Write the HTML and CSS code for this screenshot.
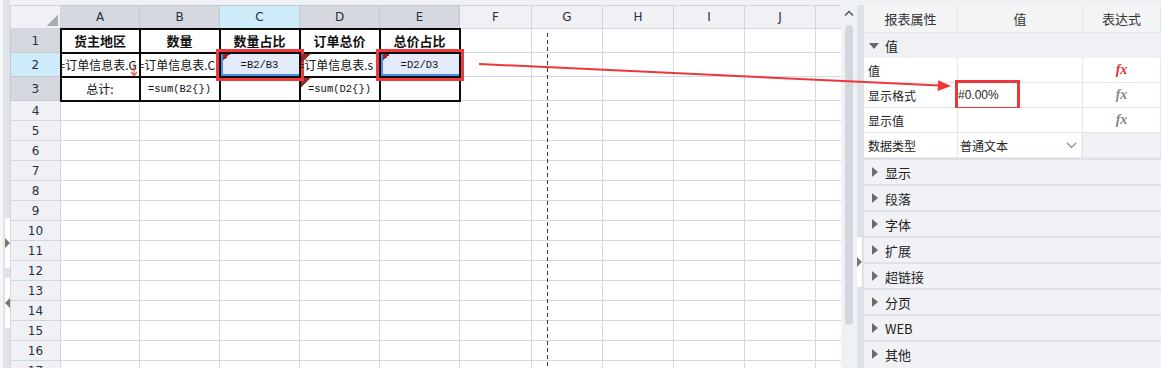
FILE: index.html
```html
<!DOCTYPE html>
<html lang="zh-CN">
<head>
    <meta charset="UTF-8">
    <title>报表设计 - 占比</title>
    <meta name="viewport" content="width=device-width, initial-scale=1">
    <link rel="stylesheet" href="styles.css">
</head>
<body>

<div class="app">
    <div class="edge">
        <div class="edge-tab"><span class="tri-right"></span></div>
        <div class="edge-tab"><span class="tri-left"></span></div>
    </div>

    <div class="main">
        <div class="sheet">
            <table class="grid">
                <colgroup>
                    <col class="w-hd">
                    <col class="w-a">
                    <col class="w-m"><col class="w-m"><col class="w-m"><col class="w-m">
                    <col class="w-f">
                    <col class="w-n"><col class="w-n"><col class="w-n"><col class="w-n"><col class="w-n">
                </colgroup>
                <thead>
                <tr class="r-head">
                    <th class="corner"></th>
                    <th class="dark">A</th>
                    <th class="dark">B</th>
                    <th class="cur">C</th>
                    <th class="dark">D</th>
                    <th class="dark">E</th>
                    <th>F</th>
                    <th>G</th>
                    <th>H</th>
                    <th>I</th>
                    <th>J</th>
                    <th></th>
                </tr>
                </thead>
                <tbody>
                <tr class="r-tall">
                    <th class="dark">1</th>
                    <td class="b title">货主地区</td>
                    <td class="b title">数量</td>
                    <td class="b title">数量占比</td>
                    <td class="b title">订单总价</td>
                    <td class="b title">总价占比</td>
                    <td></td><td></td><td></td><td></td><td></td><td></td>
                </tr>
                <tr class="r-tall">
                    <th class="cur">2</th>
                    <td class="b field"><span class="clip">=订单信息表.G</span>
                        <svg class="expand" width="8" height="14" viewBox="0 0 8 14">
                            <path d="M4 0.5V12.5M1 9l3 3.5L7 9" fill="none" stroke="#ee5a4a" stroke-width="1.2"/>
                        </svg>
                    </td>
                    <td class="b field"><span class="clip">=订单信息表.C</span></td>
                    <td class="b formula sel flag">=B2/B3</td>
                    <td class="b field flag"><span class="clip">=订单信息表.s</span></td>
                    <td class="b formula sel flag">=D2/D3</td>
                    <td></td><td></td><td></td><td></td><td></td><td></td>
                </tr>
                <tr class="r-tall">
                    <th class="dark">3</th>
                    <td class="b plain">总计:</td>
                    <td class="b formula">=sum(B2{})</td>
                    <td class="b"></td>
                    <td class="b formula flag">=sum(D2{})</td>
                    <td class="b"></td>
                    <td></td><td></td><td></td><td></td><td></td><td></td>
                </tr>
                <tr><th>4</th><td></td><td></td><td></td><td></td><td></td><td></td><td></td><td></td><td></td><td></td><td></td></tr>
                <tr><th>5</th><td></td><td></td><td></td><td></td><td></td><td></td><td></td><td></td><td></td><td></td><td></td></tr>
                <tr><th>6</th><td></td><td></td><td></td><td></td><td></td><td></td><td></td><td></td><td></td><td></td><td></td></tr>
                <tr><th>7</th><td></td><td></td><td></td><td></td><td></td><td></td><td></td><td></td><td></td><td></td><td></td></tr>
                <tr><th>8</th><td></td><td></td><td></td><td></td><td></td><td></td><td></td><td></td><td></td><td></td><td></td></tr>
                <tr><th>9</th><td></td><td></td><td></td><td></td><td></td><td></td><td></td><td></td><td></td><td></td><td></td></tr>
                <tr><th>10</th><td></td><td></td><td></td><td></td><td></td><td></td><td></td><td></td><td></td><td></td><td></td></tr>
                <tr><th>11</th><td></td><td></td><td></td><td></td><td></td><td></td><td></td><td></td><td></td><td></td><td></td></tr>
                <tr><th>12</th><td></td><td></td><td></td><td></td><td></td><td></td><td></td><td></td><td></td><td></td><td></td></tr>
                <tr><th>13</th><td></td><td></td><td></td><td></td><td></td><td></td><td></td><td></td><td></td><td></td><td></td></tr>
                <tr><th>14</th><td></td><td></td><td></td><td></td><td></td><td></td><td></td><td></td><td></td><td></td><td></td></tr>
                <tr><th>15</th><td></td><td></td><td></td><td></td><td></td><td></td><td></td><td></td><td></td><td></td><td></td></tr>
                <tr><th>16</th><td></td><td></td><td></td><td></td><td></td><td></td><td></td><td></td><td></td><td></td><td></td></tr>
                <tr><th>17</th><td></td><td></td><td></td><td></td><td></td><td></td><td></td><td></td><td></td><td></td><td></td></tr>
                </tbody>
            </table>
            <div class="page-break"></div>
        </div>

        <div class="vscroll">
            <svg class="up" width="10" height="6" viewBox="0 0 10 6">
                <path d="M1 5.5L5 1.5L9 5.5" fill="none" stroke="#555" stroke-width="1.5"/>
            </svg>
            <div class="thumb"></div>
        </div>

        <div class="splitter">
            <div class="split-tab"><span class="tri-right"></span></div>
        </div>

        <div class="panel">
            <div class="phead">
                <div>报表属性</div>
                <div>值</div>
                <div>表达式</div>
            </div>
            <div class="group"><span class="tri-down"></span>值</div>
            <div class="prop">
                <div class="k">值</div>
                <div class="v"></div>
                <div class="x"><i class="fx on">fx</i></div>
            </div>
            <div class="prop">
                <div class="k">显示格式</div>
                <div class="v"><span class="fmt">#0.00%</span></div>
                <div class="x"><i class="fx">fx</i></div>
            </div>
            <div class="prop">
                <div class="k">显示值</div>
                <div class="v"></div>
                <div class="x"><i class="fx">fx</i></div>
            </div>
            <div class="prop">
                <div class="k">数据类型</div>
                <div class="v">
                    <div class="select">
                        <span>普通文本</span>
                        <svg width="11" height="7" viewBox="0 0 11 7">
                            <path d="M1 1l4.5 4.5L10 1" fill="none" stroke="#888" stroke-width="1.1"/>
                        </svg>
                    </div>
                </div>
                <div class="x off"></div>
            </div>
            <div class="sect"><span class="tri-sect"></span>显示</div>
            <div class="sect"><span class="tri-sect"></span>段落</div>
            <div class="sect"><span class="tri-sect"></span>字体</div>
            <div class="sect"><span class="tri-sect"></span>扩展</div>
            <div class="sect"><span class="tri-sect"></span>超链接</div>
            <div class="sect"><span class="tri-sect"></span>分页</div>
            <div class="sect"><span class="tri-sect"></span>WEB</div>
            <div class="sect"><span class="tri-sect"></span>其他</div>
        </div>
    </div>
</div>

<!-- annotation: C2/E2 format goes to 显示格式 -->
<svg class="pointer" width="1161" height="368" viewBox="0 0 1161 368">
    <line x1="479" y1="64" x2="940" y2="85.5" stroke="#f0353a" stroke-width="2"/>
    <polygon points="951,86 938.2,80.2 937.6,91" fill="#f0353a"/>
</svg>

</body>
</html>
```

FILE: styles.css
```css
* {
    box-sizing: border-box;
}

html, body {
    margin: 0;
}

body {
    position: relative;
    width: 1161px;
    height: 368px;
    overflow: hidden;
    background: #f0f1f4;
    font-family: "Noto Sans CJK SC", "Liberation Sans", sans-serif;
    color: #222;
}

.app {
    display: flex;
    height: 368px;
}

/* left collapsed strip */
.edge {
    width: 10px;
    flex: none;
    display: flex;
    flex-direction: column;
    align-items: flex-end;
    gap: 10px;
    padding-top: 218px;
    background: linear-gradient(to right, #f5f6f8 0 3px, #dfe3e8 3px);
}

.edge-tab {
    width: 5px;
    height: 50px;
    background: #fff;
    display: flex;
    align-items: center;
}

.tri-right {
    width: 0;
    height: 0;
    border-top: 5px solid transparent;
    border-bottom: 5px solid transparent;
    border-left: 5px solid #7d746c;
}

.tri-left {
    width: 0;
    height: 0;
    border-top: 5px solid transparent;
    border-bottom: 5px solid transparent;
    border-right: 5px solid #7d746c;
}

.main {
    flex: 1;
    display: flex;
    padding-top: 5px;
}

/* spreadsheet */
.sheet {
    position: relative;
    width: 831px;
    flex: none;
    overflow: hidden;
    background: #fff;
}

.grid {
    border-collapse: collapse;
    table-layout: fixed;
    width: 876px;
}

.w-hd { width: 50px; }
.w-a { width: 79px; }
.w-m { width: 80px; }
.w-f { width: 72px; }
.w-n { width: 71px; }

.grid th {
    padding: 0;
    font-family: "DejaVu Sans", sans-serif;
    font-size: 12px;
    font-weight: normal;
    color: #26303c;
    background: #f0f1f4;
    border: 1px solid #d2d6dc;
    text-align: center;
}

.grid th.dark {
    background: #d5d9df;
    border-color: #c3c8cf;
}

.grid th.cur {
    background: #cdebf8;
    border-color: #c3c8cf;
}

.grid th.corner {
    background: #f0f1f4 linear-gradient(to top left, #a9adb3 50%, transparent 50%) no-repeat right 2px bottom 2px / 12px 12px;
}

.r-head {
    height: 23px;
}

.grid tbody tr {
    height: 20px;
}

.grid tbody tr.r-tall {
    height: 24px;
}

.grid td {
    padding: 0;
    border: 1px solid #d3d9e4;
    white-space: nowrap;
    overflow: hidden;
    text-align: center;
    font-size: 12px;
    color: #111;
}

.grid td.b {
    border: 2px solid #0a0a0a;
}

.grid td.title {
    font-size: 13px;
    font-weight: bold;
}

.grid td.field {
    position: relative;
    text-align: left;
}

.clip {
    margin-left: -3px;
}

.grid td.formula {
    font-family: "Liberation Mono", "DejaVu Sans Mono", monospace;
    font-size: 10.5px;
}

.grid td.plain {
    font-size: 12px;
}

.grid td.flag {
    background-image: linear-gradient(to bottom right, #98292a 50%, transparent 50%);
    background-repeat: no-repeat;
    background-position: 0 0;
    background-size: 9px 9px;
}

.grid td.sel {
    background-color: #e4ebfb;
    box-shadow: inset 2px -2px 0 #4a8ee8;
    outline: 3px solid #ee3a3f;
    outline-offset: 1px;
}

.expand {
    position: absolute;
    right: 1px;
    top: 9px;
}

.page-break {
    position: absolute;
    left: 537px;
    top: 28px;
    bottom: 0;
    width: 1px;
    background: repeating-linear-gradient(to bottom, #3a3a3a 0 4px, transparent 4px 7px);
}

/* scrollbar */
.vscroll {
    width: 16px;
    flex: none;
    display: flex;
    flex-direction: column;
    align-items: center;
    background: #f0f1f4;
}

.up {
    margin-top: 5px;
}

.thumb {
    width: 8px;
    height: 300px;
    margin-top: 9px;
    border-radius: 4px;
    background: #d3d7dd;
}

.splitter {
    width: 7px;
    flex: none;
    padding-top: 232px;
    background: #dde2e8;
}

.split-tab {
    width: 5px;
    height: 50px;
    background: #fff;
    display: flex;
    align-items: center;
}

/* property panel */
.panel {
    width: 297px;
    flex: none;
    display: flex;
    flex-direction: column;
    font-size: 13px;
    color: #222;
}

.phead {
    display: grid;
    grid-template-columns: 94px 125px 78px;
    height: 28px;
    background: #f3f4f6;
    border-bottom: 1px solid #e3e6ea;
}

.phead div {
    display: flex;
    align-items: center;
    justify-content: center;
    border-right: 1px solid #e3e6ea;
    color: #333;
}

.group {
    height: 25px;
    display: flex;
    align-items: center;
    gap: 6px;
    padding-left: 5px;
    background: #f0f1f4;
}

.tri-down {
    width: 0;
    height: 0;
    border-left: 5px solid transparent;
    border-right: 5px solid transparent;
    border-top: 6px solid #666;
}

.prop {
    display: grid;
    grid-template-columns: 94px 125px 78px;
    height: 25px;
    background: #fff;
    border-bottom: 1px solid #e6e8ec;
    font-size: 12px;
}

.prop > div {
    display: flex;
    align-items: center;
    border-right: 1px solid #e6e8ec;
}

.prop .k {
    padding-left: 4px;
}

.prop .x {
    justify-content: center;
}

.prop .x.off {
    background: #f0f1f4;
}

.fx {
    font-family: "Liberation Serif", serif;
    font-weight: bold;
    font-size: 14px;
    color: #888;
}

.fx.on {
    color: #e8302f;
}

.fmt {
    display: inline-flex;
    align-items: center;
    width: 59px;
    height: 24px;
    font-family: "Liberation Sans", sans-serif;
    font-size: 12px;
    outline: 3px solid #e8373a;
}

.select {
    flex: 1;
    height: 23px;
    margin-left: 2px;
    display: flex;
    align-items: center;
    justify-content: space-between;
    padding: 0 4px 0 0;
    background: #fff;
    border-right: 1px solid #e6e8ec;
}

.sect {
    height: 26px;
    display: flex;
    align-items: center;
    gap: 7px;
    padding-left: 8px;
    background: #f0f2f5;
    border-top: 2px solid #dde1e8;
}

.tri-sect {
    width: 0;
    height: 0;
    border-top: 5px solid transparent;
    border-bottom: 5px solid transparent;
    border-left: 6px solid #6c6c6c;
}

.pointer {
    position: absolute;
    left: 0;
    top: 0;
    pointer-events: none;
}
```
